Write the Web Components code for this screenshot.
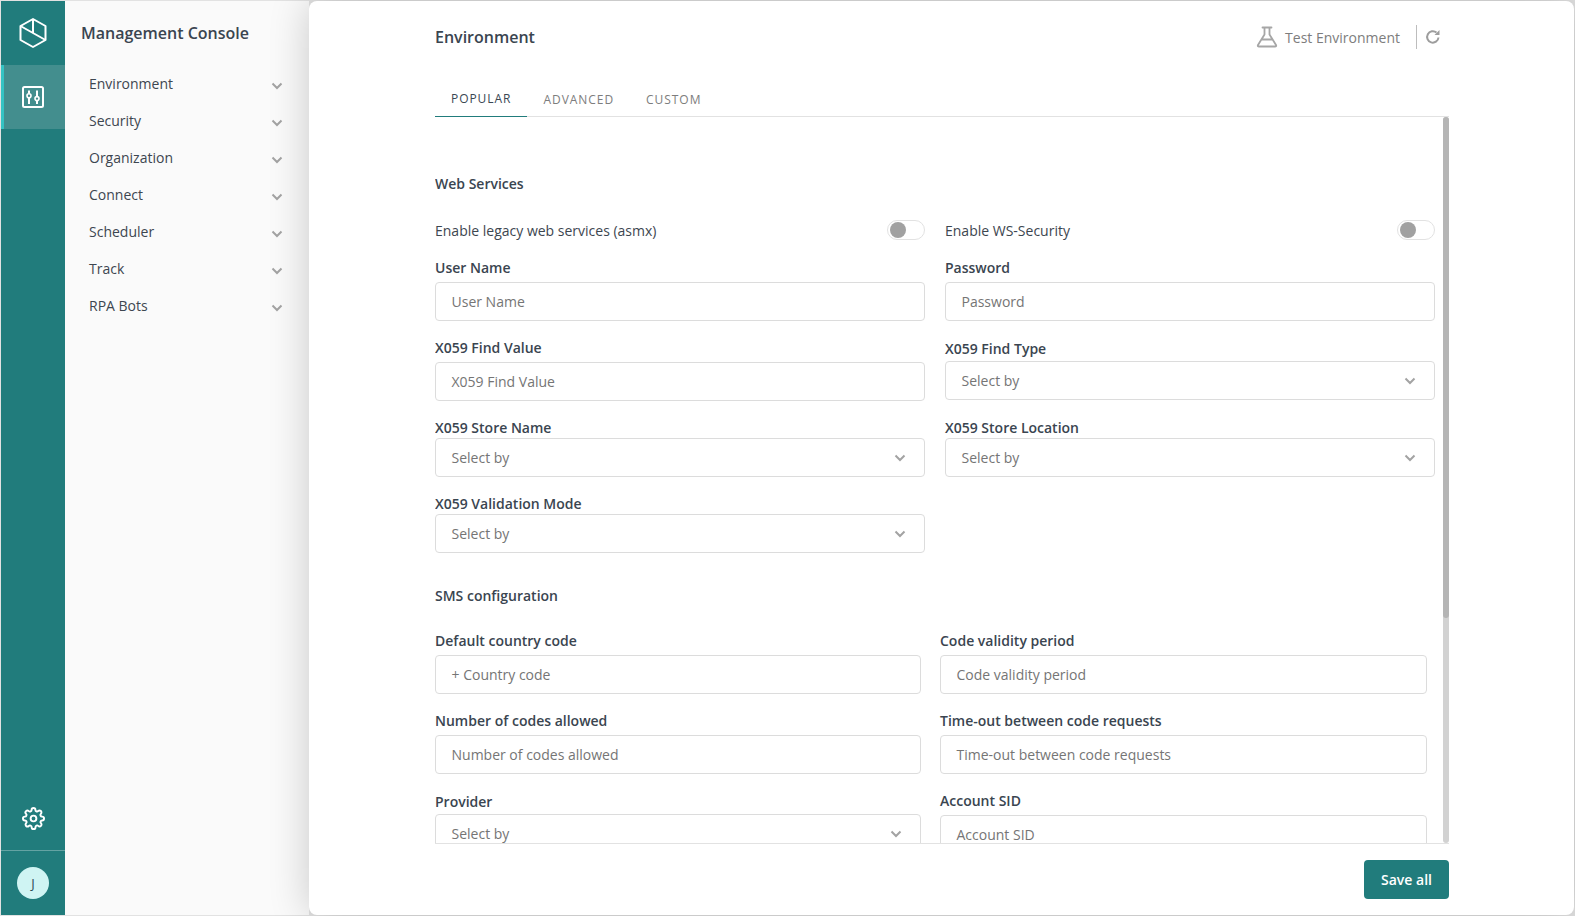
<!DOCTYPE html>
<html>
<head>
<meta charset="utf-8">
<title>Management Console</title>
<style>
  html, body { margin: 0; height: 100%; }
  body {
    background: #e2e2e2;
    padding: 1px;
    box-sizing: border-box;
    overflow: hidden;
    font-family: "Open Sans", "Liberation Sans", sans-serif;
    font-size: 14px;
    color: #333;
  }
  console-app { height: 914px; }
</style>
</head>
<body>
<console-app>
  <side-rail slot="rail"></side-rail>
  <side-menu slot="menu" heading="Management Console">
    <menu-item>Environment</menu-item>
    <menu-item>Security</menu-item>
    <menu-item>Organization</menu-item>
    <menu-item>Connect</menu-item>
    <menu-item>Scheduler</menu-item>
    <menu-item>Track</menu-item>
    <menu-item>RPA Bots</menu-item>
  </side-menu>
  <main-panel slot="panel" heading="Environment">
    <section-title style="margin-top:57px">Web Services</section-title>

    <form-row style="margin-top:26px">
      <toggle-field>Enable legacy web services (asmx)</toggle-field>
      <toggle-field>Enable WS-Security</toggle-field>
    </form-row>

    <form-row style="margin-top:18px">
      <form-field label="User Name" placeholder="User Name" style="--gap:4px"></form-field>
      <form-field label="Password" placeholder="Password" style="--gap:4px"></form-field>
    </form-row>
    <form-row style="margin-top:17px">
      <form-field label="X059 Find Value" placeholder="X059 Find Value" style="--gap:4px"></form-field>
      <form-field label="X059 Find Type" select style="--top:1px;--gap:2px"></form-field>
    </form-row>
    <form-row style="margin-top:17px">
      <form-field label="X059 Store Name" select style="--gap:0px"></form-field>
      <form-field label="X059 Store Location" select style="--gap:0px"></form-field>
    </form-row>
    <form-row style="margin-top:17px">
      <form-field label="X059 Validation Mode" select style="--gap:0px"></form-field>
    </form-row>

    <section-title style="margin-top:33px">SMS configuration</section-title>

    <form-row narrow style="margin-top:25px">
      <form-field label="Default country code" placeholder="+ Country code" style="--gap:4px"></form-field>
      <form-field label="Code validity period" placeholder="Code validity period" style="--gap:4px"></form-field>
    </form-row>
    <form-row narrow style="margin-top:17px">
      <form-field label="Number of codes allowed" placeholder="Number of codes allowed" style="--gap:4px"></form-field>
      <form-field label="Time-out between code requests" placeholder="Time-out between code requests" style="--gap:4px"></form-field>
    </form-row>
    <form-row narrow style="margin-top:17px">
      <form-field label="Provider" select style="--top:1px;--gap:2px"></form-field>
      <form-field label="Account SID" placeholder="Account SID" style="--gap:4px"></form-field>
    </form-row>
  </main-panel>
</console-app>

<script>
// Shared chevron, used by the menu and the select boxes
const CHEVRON = `<svg width="12" height="8" viewBox="0 0 12 8" fill="none" stroke="#a3a3a3" stroke-width="2"><path d="M1.5 1.5 6 6l4.5-4.5"/></svg>`;

// Outer layout: rail, menu and the white panel
class ConsoleApp extends HTMLElement {
  constructor() {
    super();
    const shadow = this.attachShadow({ mode: 'open' });
    shadow.innerHTML = `
    <style>
      :host { display: flex; width: 100%; }
      .menu { display: flex; width: 244px; flex: none; }
      .panel { display: flex; flex: 1; min-width: 0; }
    </style>
    <slot name="rail"></slot>
    <div class="menu"><slot name="menu"></slot></div>
    <div class="panel"><slot name="panel"></slot></div>
    `;
  }
}
customElements.define('console-app', ConsoleApp);

// Dark teal icon strip on the far left
class SideRail extends HTMLElement {
  constructor() {
    super();
    const shadow = this.attachShadow({ mode: 'open' });
    shadow.innerHTML = `
    <style>
      :host {
        display: flex;
        flex-direction: column;
        width: 64px;
        flex: none;
        background: #217c7c;
        color: #fff;
      }
      .logo { height: 64px; display: flex; align-items: center; justify-content: center; }
      .active {
        height: 64px;
        display: flex;
        align-items: center;
        justify-content: center;
        background: #438e8e;
        border-left: 3px solid #35c3c3;
        box-sizing: border-box;
        padding-right: 3px;
      }
      .gear { margin-top: auto; height: 64px; display: flex; align-items: center; justify-content: center; }
      .user {
        height: 65px;
        border-top: 1px solid rgba(255,255,255,.3);
        box-sizing: border-box;
        display: flex;
        align-items: center;
        justify-content: center;
      }
      .avatar {
        width: 32px;
        height: 32px;
        border-radius: 50%;
        background: #cff4f3;
        color: #2b4a55;
        font-size: 13px;
        display: flex;
        align-items: center;
        justify-content: center;
      }
    </style>
    <div class="logo">
      <svg width="30" height="32" viewBox="0 0 30 32" fill="none" stroke="#fff" stroke-width="2" stroke-linejoin="round">
        <path d="M15 2 27.5 9v14L15 30 2.5 23V9z"/>
        <path d="M15 2v14M2.5 9l25 14"/>
      </svg>
    </div>
    <div class="active">
      <svg width="24" height="24" viewBox="0 0 24 24" fill="none" stroke="#fff" stroke-width="2">
        <rect x="2" y="2" width="20" height="20" rx="1.5"/>
        <path d="M8 5.5v3M8 13v6M16 5.5v6M16 16v3"/>
        <circle cx="8" cy="10.8" r="2" stroke-width="1.6"/>
        <circle cx="16" cy="13.6" r="2" stroke-width="1.6"/>
      </svg>
    </div>
    <div class="gear">
      <svg width="23" height="23" viewBox="0 0 24 24" fill="none" stroke="#fff" stroke-width="2" stroke-linecap="round" stroke-linejoin="round">
        <circle cx="12" cy="12" r="3"/>
        <path d="M19.4 15a1.65 1.65 0 0 0 .33 1.82l.06.06a2 2 0 1 1-2.83 2.83l-.06-.06a1.65 1.65 0 0 0-1.82-.33 1.65 1.65 0 0 0-1 1.51V21a2 2 0 1 1-4 0v-.09a1.65 1.65 0 0 0-1.08-1.51 1.65 1.65 0 0 0-1.82.33l-.06.06a2 2 0 1 1-2.83-2.83l.06-.06a1.65 1.65 0 0 0 .33-1.82 1.65 1.65 0 0 0-1.51-1H3a2 2 0 1 1 0-4h.09a1.65 1.65 0 0 0 1.51-1.08 1.65 1.65 0 0 0-.33-1.82l-.06-.06a2 2 0 1 1 2.83-2.83l.06.06a1.65 1.65 0 0 0 1.82.33H9a1.65 1.65 0 0 0 1-1.51V3a2 2 0 1 1 4 0v.09a1.65 1.65 0 0 0 1 1.51 1.65 1.65 0 0 0 1.82-.33l.06-.06a2 2 0 1 1 2.83 2.83l-.06.06a1.65 1.65 0 0 0-.33 1.82V9a1.65 1.65 0 0 0 1.51 1H21a2 2 0 1 1 0 4h-.09a1.65 1.65 0 0 0-1.51 1z"/>
      </svg>
    </div>
    <div class="user"><div class="avatar">J</div></div>
    `;
  }
}
customElements.define('side-rail', SideRail);

// Light column with the console sections
class SideMenu extends HTMLElement {
  constructor() {
    super();
    const shadow = this.attachShadow({ mode: 'open' });
    shadow.innerHTML = `
    <style>
      :host {
        display: block;
        width: 100%;
        background: #fafafa;
        box-sizing: border-box;
        padding: 20px 0 0 16px;
      }
      h1 {
        margin: 0 0 20px;
        font-size: 16px;
        line-height: 24px;
        font-weight: 600;
        color: #3a4550;
      }
    </style>
    <h1>${this.getAttribute('heading')}</h1>
    <slot></slot>
    `;
  }
}
customElements.define('side-menu', SideMenu);

class MenuItem extends HTMLElement {
  constructor() {
    super();
    const shadow = this.attachShadow({ mode: 'open' });
    shadow.innerHTML = `
    <style>
      :host {
        display: flex;
        align-items: center;
        justify-content: space-between;
        height: 37px;
        padding: 0 26px 0 8px;
        color: #3d4650;
        font-size: 14px;
      }
      svg { margin-top: 5px; }
    </style>
    <slot></slot>
    ${CHEVRON}
    `;
  }
}
customElements.define('menu-item', MenuItem);

// White panel: header, tabs, scrolling form, footer
class MainPanel extends HTMLElement {
  constructor() {
    super();
    const shadow = this.attachShadow({ mode: 'open' });
    shadow.innerHTML = `
    <style>
      :host {
        display: flex;
        flex-direction: column;
        flex: 1;
        min-width: 0;
        position: relative;
        background: #fff;
        border-radius: 8px;
        box-shadow: 0 0 40px rgba(0,0,0,.2);
        padding: 0 125px 0 126px;
        box-sizing: border-box;
      }
      header {
        display: flex;
        align-items: center;
        height: 72px;
        flex: none;
      }
      h2 { margin: 0; font-size: 16px; font-weight: 600; color: #3a4550; }
      .test {
        margin-left: auto;
        display: flex;
        align-items: center;
        color: #7d7d7d;
        font-size: 14px;
      }
      .test svg { margin-right: 7px; }
      .divider { width: 1px; height: 24px; background: #bdbdbd; margin: 0 8px 0 16px; }
      .refresh { margin-right: 8px; }
      .body { display: flex; flex: none; height: 726px; border-bottom: 1px solid #e2e2e2; }
      .scroller { flex: 1; min-width: 0; overflow: hidden; padding-right: 8px; }
      .bar { width: 6px; flex: none; background: #d2d2d2; border-radius: 3px; position: relative; }
      .thumb { height: 501px; background: #b5b5b5; border-radius: 3px; }
      footer { display: flex; justify-content: flex-end; padding-top: 16px; }
      button {
        height: 39px;
        width: 85px;
        border: 0;
        border-radius: 4px;
        background: #217c7c;
        color: #fff;
        font: 600 14px "Open Sans", "Liberation Sans", sans-serif;
      }
    </style>
    <header>
      <h2>${this.getAttribute('heading')}</h2>
      <div class="test">
        <svg width="22" height="22" viewBox="0 0 22 22" fill="none" stroke="#a6a6a6" stroke-width="1.8" stroke-linejoin="round" stroke-linecap="round">
          <path d="M6.5 1.5h9M8.5 1.5v7L2 19c-.5 1 0 1.5 1 1.5h16c1 0 1.5-.5 1-1.5L13.5 8.5v-7M5.5 13.5h11"/>
        </svg>
        Test Environment
      </div>
      <div class="divider"></div>
      <svg class="refresh" width="16" height="16" viewBox="0 0 16 16" fill="none" stroke="#9d9d9d" stroke-width="2">
        <path d="M13.5 8.5A5.7 5.7 0 1 1 11.5 3.6"/>
        <path d="M14.5 1v5h-5z" fill="#9d9d9d" stroke="none"/>
      </svg>
    </header>
    <tab-bar></tab-bar>
    <div class="body">
      <div class="scroller"><slot></slot></div>
      <div class="bar"><div class="thumb"></div></div>
    </div>
    <footer><button>Save all</button></footer>
    `;
  }
}
customElements.define('main-panel', MainPanel);

class TabBar extends HTMLElement {
  constructor() {
    super();
    const shadow = this.attachShadow({ mode: 'open' });
    shadow.innerHTML = `
    <style>
      :host {
        display: flex;
        height: 44px;
        flex: none;
        box-sizing: border-box;
        border-bottom: 1px solid #e2e2e2;
        font-size: 12px;
        letter-spacing: .95px;
        color: #7d7d7d;
      }
      div {
        display: flex;
        align-items: center;
        padding: 9px 16px 0;
        height: 44px;
        box-sizing: border-box;
      }
      .on {
        color: #3a4753;
        padding-top: 7px;
        border-bottom: 1px solid #217c7c;
      }
    </style>
    <div class="on">POPULAR</div>
    <div>ADVANCED</div>
    <div>CUSTOM</div>
    `;
  }
}
customElements.define('tab-bar', TabBar);

class SectionTitle extends HTMLElement {
  constructor() {
    super();
    const shadow = this.attachShadow({ mode: 'open' });
    shadow.innerHTML = `
    <style>
      :host {
        display: block;
        height: 20px;
        line-height: 20px;
        font-size: 14px;
        font-weight: 600;
        color: #3a4550;
      }
    </style>
    <slot></slot>
    `;
  }
}
customElements.define('section-title', SectionTitle);

// Two column row, "narrow" is the tighter grid of the SMS block
class FormRow extends HTMLElement {
  constructor() {
    super();
    const shadow = this.attachShadow({ mode: 'open' });
    const cols = this.hasAttribute('narrow') ? '486px 487px' : '490px 490px';
    const gap = this.hasAttribute('narrow') ? '19px' : '20px';
    shadow.innerHTML = `
    <style>
      :host {
        display: grid;
        grid-template-columns: ${cols};
        column-gap: ${gap};
        align-items: start;
      }
    </style>
    <slot></slot>
    `;
  }
}
customElements.define('form-row', FormRow);

class ToggleField extends HTMLElement {
  constructor() {
    super();
    const shadow = this.attachShadow({ mode: 'open' });
    shadow.innerHTML = `
    <style>
      :host {
        display: flex;
        align-items: center;
        justify-content: space-between;
        height: 20px;
        color: #3d4650;
        font-size: 14px;
      }
      .switch {
        width: 38px;
        height: 20px;
        box-sizing: border-box;
        border: 1px solid #e2e2e2;
        border-radius: 10px;
        padding: 1px 2px;
        background: #fff;
      }
      .knob { width: 16px; height: 16px; border-radius: 50%; background: #a1a1a1; }
    </style>
    <slot></slot>
    <div class="switch"><div class="knob"></div></div>
    `;
  }
}
customElements.define('toggle-field', ToggleField);

// Label above a text box or a select box
class FormField extends HTMLElement {
  constructor() {
    super();
    const shadow = this.attachShadow({ mode: 'open' });
    const isSelect = this.hasAttribute('select');
    const text = isSelect ? 'Select by' : this.getAttribute('placeholder');
    shadow.innerHTML = `
    <style>
      :host {
        display: block;
        padding-top: var(--top, 0);
      }
      label {
        display: block;
        height: 20px;
        line-height: 20px;
        margin-bottom: var(--gap, 4px);
        font-size: 14px;
        font-weight: 600;
        color: #3a4550;
      }
      .box {
        display: flex;
        align-items: center;
        justify-content: space-between;
        height: 39px;
        box-sizing: border-box;
        border: 1px solid #dcdcdc;
        border-radius: 4px;
        padding: 0 18px 0 15.5px;
        color: #757575;
        font-size: 14px;
        background: #fff;
      }
    </style>
    <label>${this.getAttribute('label')}</label>
    <div class="box"><span>${text}</span>${isSelect ? CHEVRON : ''}</div>
    `;
  }
}
customElements.define('form-field', FormField);
</script>
</body>
</html>
